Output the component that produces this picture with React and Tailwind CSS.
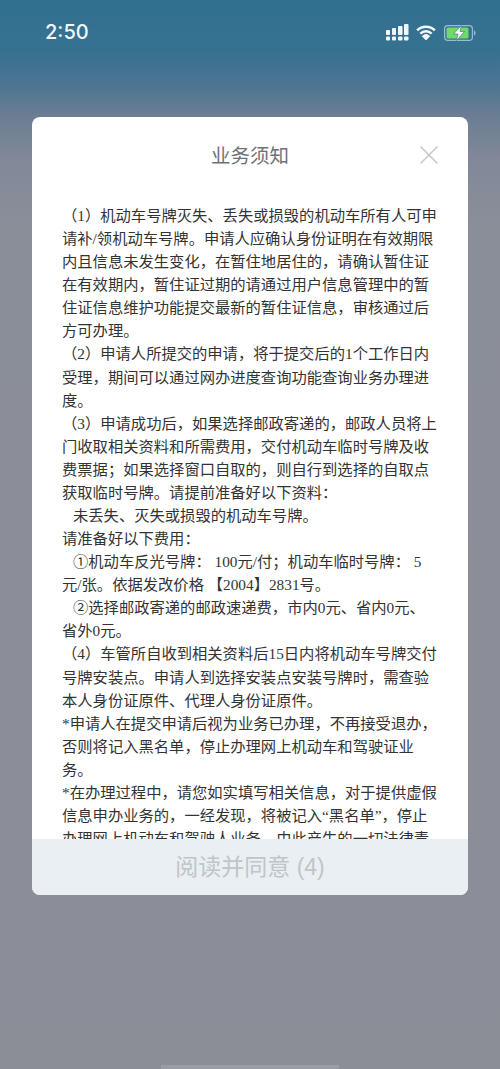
const lines = [
  { text: "（1）机动车号牌灭失、丢失或损毁的机动车所有人可申" },
  { text: "请补/领机动车号牌。申请人应确认身份证明在有效期限" },
  { text: "内且信息未发生变化，在暂住地居住的，请确认暂住证" },
  { text: "在有效期内，暂住证过期的请通过用户信息管理中的暂" },
  { text: "住证信息维护功能提交最新的暂住证信息，审核通过后" },
  { text: "方可办理。" },
  { text: "（2）申请人所提交的申请，将于提交后的1个工作日内" },
  { text: "受理，期间可以通过网办进度查询功能查询业务办理进" },
  { text: "度。" },
  { text: "（3）申请成功后，如果选择邮政寄递的，邮政人员将上" },
  { text: "门收取相关资料和所需费用，交付机动车临时号牌及收" },
  { text: "费票据；如果选择窗口自取的，则自行到选择的自取点" },
  { text: "获取临时号牌。请提前准备好以下资料：" },
  { text: "未丢失、灭失或损毁的机动车号牌。", indent: true },
  { text: "请准备好以下费用：" },
  { text: "①机动车反光号牌： 100元/付；机动车临时号牌： 5", indent: true },
  { text: "元/张。依据发改价格 【2004】2831号。" },
  { text: "②选择邮政寄递的邮政速递费，市内0元、省内0元、", indent: true },
  { text: "省外0元。" },
  { text: "（4）车管所自收到相关资料后15日内将机动车号牌交付" },
  { text: "号牌安装点。申请人到选择安装点安装号牌时，需查验" },
  { text: "本人身份证原件、代理人身份证原件。" },
  { text: "*申请人在提交申请后视为业务已办理，不再接受退办，" },
  { text: "否则将记入黑名单，停止办理网上机动车和驾驶证业" },
  { text: "务。" },
  { text: "*在办理过程中，请您如实填写相关信息，对于提供虚假" },
  { text: "信息申办业务的，一经发现，将被记入“黑名单”，停止" },
  { text: "办理网上机动车和驾驶人业务。由此产生的一切法律责" },
];

function StatusIcons() {
  return (
    <div className="flex items-center gap-[7px]">
      {/* signal */}
      <svg width="23" height="17" viewBox="0 0 23 17" fill="#f4f7f9">
        <rect x="0" y="6" width="4" height="5" rx="1" />
        <rect x="0" y="12.5" width="4" height="4" rx="1" />
        <rect x="6" y="4" width="4" height="7" rx="1" />
        <rect x="6" y="12.5" width="4" height="4" rx="1" />
        <rect x="12" y="2" width="4.5" height="9" rx="1" />
        <rect x="12" y="12.5" width="4.5" height="4" rx="1" />
        <rect x="18" y="0" width="4.5" height="11" rx="1" />
        <rect x="18" y="12.5" width="4.5" height="4" rx="1" />
      </svg>
      {/* wifi */}
      <svg width="20" height="15" viewBox="0 0 21 15" fill="none" stroke="#f4f7f9" strokeWidth="2.6">
        <path d="M1.2 5.2C6.4 0.2 14.6 0.2 19.8 5.2" />
        <path d="M4.6 8.6C8 5.4 13 5.4 16.4 8.6" />
        <path d="M8 11.6C9.4 10.4 11.6 10.4 13 11.6L10.5 14Z" fill="#f4f7f9" />
      </svg>
      {/* battery */}
      <svg width="32" height="16" viewBox="0 0 32 16" className="ml-[1px]">
        <rect x="0.6" y="0.6" width="27.8" height="14.8" rx="3.2" fill="none" stroke="#9fbccb" strokeWidth="1.2" />
        <rect x="2.5" y="2.5" width="22" height="11" rx="1.6" fill="#6fd96b" />
        <path d="M30 5.5C31 5.8 31.6 6.8 31.6 8S31 10.2 30 10.5Z" fill="#9fbccb" />
        <path d="M17.5 0.5L9.5 9H14L12.5 15.5L20.5 6.5H16Z" fill="#f6fafa" stroke="#33708f" strokeWidth="0.6" />
      </svg>
    </div>
  );
}

export default function App() {
  return (
    <div className="relative w-[500px] h-[1069px] overflow-hidden flex flex-col bg-[linear-gradient(180deg,#32708f_0px,#367190_50px,#4c7591_85px,#6b7d92_115px,#82889a_160px,#8a8e98_220px,#8b8e97_1069px)]">
      {/* status bar */}
      <div className="h-[117px] shrink-0 pl-[45px] pr-[24px] pt-[18px] flex items-start justify-between">
        <span className="font-['Inter',sans-serif] text-[20px] leading-[28px] font-medium text-[#f4f7f9]">
          2:50
        </span>
        <div className="pt-[6px]">
          <StatusIcons />
        </div>
      </div>

      {/* modal */}
      <div className="mx-[32px] h-[778px] shrink-0 flex flex-col overflow-hidden rounded-lg bg-white">
        <div className="relative h-[87px] shrink-0 flex justify-center pt-[24px]">
          <h1 className="font-['Noto_Sans_CJK_SC',sans-serif] text-[19.5px] leading-[28px] font-normal text-[#6d7277]">
            业务须知
          </h1>
          <svg
            width="20"
            height="20"
            viewBox="0 0 20 20"
            fill="none"
            stroke="#c6c9cc"
            strokeWidth="1.6"
            className="absolute top-[28px] right-[29px]"
          >
            <path d="M1.5 1.5L18.5 18.5M18.5 1.5L1.5 18.5" />
          </svg>
        </div>

        <div className="flex-1 overflow-hidden px-[30px] font-['Liberation_Serif','Noto_Sans_CJK_SC',sans-serif] text-[15.3px] leading-[23.08px] text-[#333333]">
          {lines.map((line, i) => (
            <div key={i} className={line.indent ? "whitespace-nowrap pl-[11px]" : "whitespace-nowrap"}>
              {line.text}
            </div>
          ))}
        </div>

        <div className="h-[56px] shrink-0 flex items-center justify-center bg-[#e9eff2] font-['Liberation_Sans','Noto_Sans_CJK_SC',sans-serif] text-[23px] text-[#bfc5c9]">
          阅读并同意 (4)
        </div>
      </div>

      {/* home indicator */}
      <div className="mt-auto mx-auto h-[4px] w-[178px] bg-[#9a9da5]" />
    </div>
  );
}
